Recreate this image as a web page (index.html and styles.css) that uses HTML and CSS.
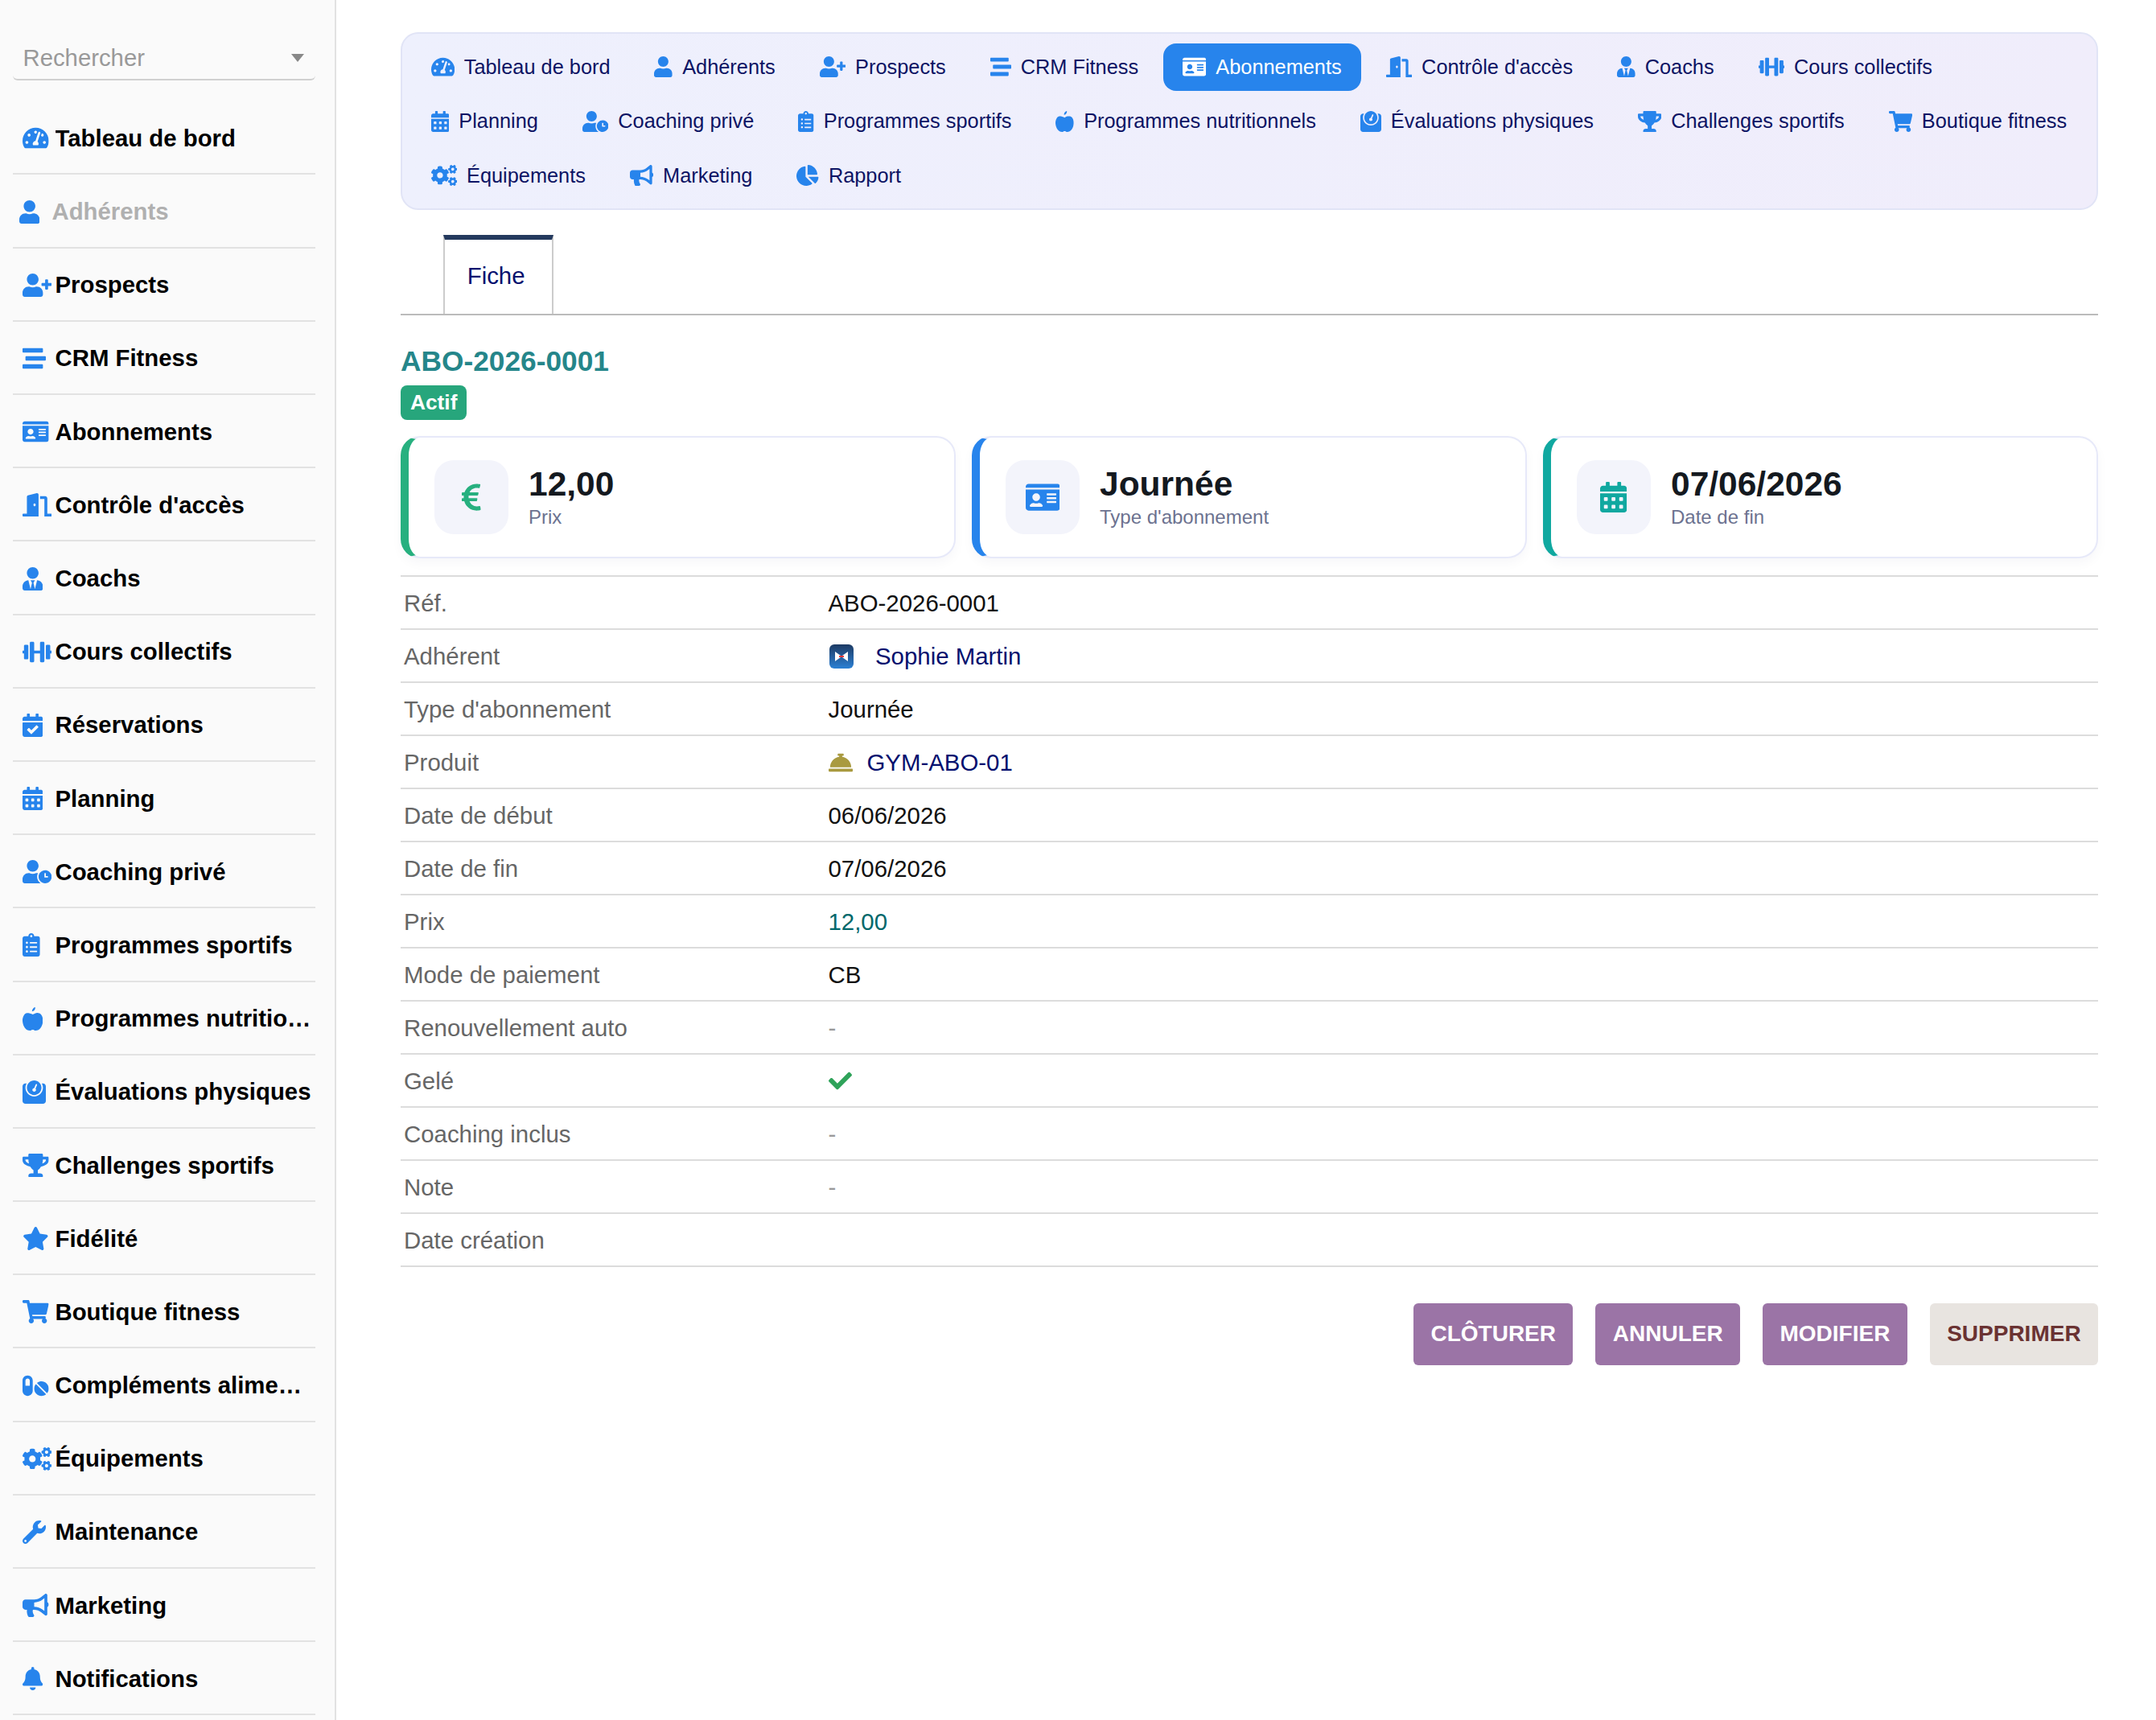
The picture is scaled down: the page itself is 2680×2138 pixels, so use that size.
FILE: index.html
```html
<!DOCTYPE html>
<html lang="fr">
<head>
<meta charset="utf-8">
<title>ABO-2026-0001</title>
<link rel="stylesheet" href="styles.css">
</head>
<body>
<svg class="sprite" aria-hidden="true">
<symbol id="i-gauge" viewBox="0 0 576 512"><path d="M288 32C128.94 32 0 160.94 0 320c0 52.8 14.25 102.26 39.06 144.8 5.61 9.62 16.3 15.2 27.44 15.2h443c11.14 0 21.83-5.58 27.44-15.2C561.75 422.26 576 372.8 576 320c0-159.06-128.94-288-288-288zm0 64c14.71 0 26.58 10.13 30.32 23.65-1.11 2.26-2.64 4.23-3.45 6.67l-9.22 27.67c-5.13 3.49-10.97 6.01-17.64 6.01-17.67 0-32-14.33-32-32S270.33 96 288 96zM96 384c-17.67 0-32-14.33-32-32s14.33-32 32-32 32 14.33 32 32-14.33 32-32 32zm48-160c-17.67 0-32-14.33-32-32s14.33-32 32-32 32 14.33 32 32-14.33 32-32 32zm246.77-72.41l-61.33 184C343.13 347.33 352 364.54 352 384c0 11.72-3.38 22.55-8.88 32H232.88c-5.5-9.45-8.88-20.28-8.88-32 0-33.94 26.5-61.43 59.9-63.59l61.34-184.01c4.17-12.56 17.73-19.45 30.36-15.17 12.57 4.19 19.35 17.79 15.17 30.36zm14.66 57.2l15.52-46.55c3.47-1.29 7.13-2.23 11.05-2.23 17.67 0 32 14.33 32 32s-14.33 32-32 32c-11.38-.01-20.89-6.28-26.57-15.22zM480 384c-17.67 0-32-14.33-32-32s14.33-32 32-32 32 14.33 32 32-14.33 32-32 32z"/></symbol>
<symbol id="i-user" viewBox="0 0 448 512"><path d="M224 256c70.7 0 128-57.3 128-128S294.7 0 224 0 96 57.3 96 128s57.3 128 128 128zm89.6 32h-16.7c-22.2 10.2-46.9 16-72.9 16s-50.6-5.8-72.9-16h-16.7C60.2 288 0 348.2 0 422.4V464c0 26.5 21.5 48 48 48h352c26.5 0 48-21.5 48-48v-41.6c0-74.2-60.2-134.4-134.4-134.4z"/></symbol>
<symbol id="i-user-plus" viewBox="0 0 640 512"><path d="M624 208h-64v-64c0-8.8-7.2-16-16-16h-32c-8.8 0-16 7.2-16 16v64h-64c-8.8 0-16 7.2-16 16v32c0 8.8 7.2 16 16 16h64v64c0 8.8 7.2 16 16 16h32c8.8 0 16-7.2 16-16v-64h64c8.8 0 16-7.2 16-16v-32c0-8.8-7.2-16-16-16zm-400 48c70.7 0 128-57.3 128-128S294.7 0 224 0 96 57.3 96 128s57.3 128 128 128zm89.6 32h-16.7c-22.2 10.2-46.9 16-72.9 16s-50.6-5.8-72.9-16h-16.7C60.2 288 0 348.2 0 422.4V464c0 26.5 21.5 48 48 48h352c26.5 0 48-21.5 48-48v-41.6c0-74.2-60.2-134.4-134.4-134.4z"/></symbol>
<symbol id="i-stream" viewBox="0 0 512 512"><path d="M16 128h416c8.84 0 16-7.16 16-16V48c0-8.84-7.16-16-16-16H16C7.16 32 0 39.16 0 48v64c0 8.84 7.16 16 16 16zm480 80H80c-8.84 0-16 7.16-16 16v64c0 8.84 7.16 16 16 16h416c8.84 0 16-7.16 16-16v-64c0-8.84-7.16-16-16-16zm-64 176H16c-8.84 0-16 7.16-16 16v64c0 8.84 7.16 16 16 16h416c8.84 0 16-7.16 16-16v-64c0-8.84-7.16-16-16-16z"/></symbol>
<symbol id="i-id" viewBox="0 0 576 512"><path d="M528 32H48C21.5 32 0 53.5 0 80v16h576V80c0-26.5-21.5-48-48-48zM0 432c0 26.5 21.5 48 48 48h480c26.5 0 48-21.5 48-48V128H0v304zm352-232c0-4.4 3.6-8 8-8h144c4.4 0 8 3.6 8 8v16c0 4.4-3.6 8-8 8H360c-4.4 0-8-3.6-8-8v-16zm0 64c0-4.4 3.6-8 8-8h144c4.4 0 8 3.6 8 8v16c0 4.4-3.6 8-8 8H360c-4.4 0-8-3.6-8-8v-16zm0 64c0-4.4 3.6-8 8-8h144c4.4 0 8 3.6 8 8v16c0 4.4-3.6 8-8 8H360c-4.4 0-8-3.6-8-8v-16zM176 192c35.3 0 64 28.7 64 64s-28.7 64-64 64-64-28.7-64-64 28.7-64 64-64zM67.1 396.2C75.5 370.5 99.6 352 128 352h8.2c12.3 5.1 25.7 8 39.8 8s27.6-2.9 39.8-8h8.2c28.4 0 52.5 18.5 60.9 44.2 3.2 9.9-5.2 19.8-15.6 19.8H82.7c-10.4 0-18.8-10-15.6-19.8z"/></symbol>
<symbol id="i-door" viewBox="0 0 640 512"><path d="M624 448h-80V113.45C544 86.19 522.47 64 496 64H384v64h96v384h144c8.84 0 16-7.16 16-16v-32c0-8.84-7.16-16-16-16zM312.24 1.01l-192 49.74C105.99 54.44 96 67.7 96 82.92V448H16c-8.84 0-16 7.16-16 16v32c0 8.84 7.16 16 16 16h336V33.18c0-21.58-19.56-37.41-39.76-32.17zM264 288c-13.25 0-24-14.33-24-32s10.75-32 24-32 24 14.33 24 32-10.75 32-24 32z"/></symbol>
<symbol id="i-tie" viewBox="0 0 448 512"><path d="M224 256c70.7 0 128-57.3 128-128S294.7 0 224 0 96 57.3 96 128s57.3 128 128 128zm95.8 32.6L272 480l-32-136 32-56h-96l32 56-32 136-47.8-191.4C56.9 292 0 350.3 0 422.4V464c0 26.5 21.5 48 48 48h352c26.5 0 48-21.5 48-48v-41.6c0-72.1-56.9-130.4-128.2-133.8z"/></symbol>
<symbol id="i-dumbbell" viewBox="0 0 640 512"><path d="M104 96H56c-13.3 0-24 10.7-24 24v104H8c-4.4 0-8 3.6-8 8v48c0 4.4 3.6 8 8 8h24v104c0 13.3 10.7 24 24 24h48c13.3 0 24-10.7 24-24V120c0-13.3-10.7-24-24-24zm528 128h-24V120c0-13.3-10.7-24-24-24h-48c-13.3 0-24 10.7-24 24v272c0 13.3 10.7 24 24 24h48c13.3 0 24-10.7 24-24V288h24c4.4 0 8-3.6 8-8v-48c0-4.4-3.6-8-8-8zM456 32h-48c-13.3 0-24 10.7-24 24v168H256V56c0-13.3-10.7-24-24-24h-48c-13.3 0-24 10.7-24 24v400c0 13.3 10.7 24 24 24h48c13.3 0 24-10.7 24-24V288h128v168c0 13.3 10.7 24 24 24h48c13.3 0 24-10.7 24-24V56c0-13.3-10.7-24-24-24z"/></symbol>
<symbol id="i-cal-check" viewBox="0 0 448 512"><path d="M436 160H12c-6.6 0-12-5.4-12-12v-36c0-26.5 21.5-48 48-48h48V12c0-6.6 5.4-12 12-12h40c6.6 0 12 5.4 12 12v52h128V12c0-6.6 5.4-12 12-12h40c6.6 0 12 5.4 12 12v52h48c26.5 0 48 21.5 48 48v36c0 6.6-5.4 12-12 12zM12 192h424c6.6 0 12 5.4 12 12v260c0 26.5-21.5 48-48 48H48c-26.5 0-48-21.5-48-48V204c0-6.6 5.4-12 12-12zm333.3 95.9l-28.2-28.4c-4.7-4.7-12.3-4.7-17-.1L194 365.9l-46-46.4c-4.7-4.7-12.3-4.7-17-.1l-28.4 28.2c-4.7 4.7-4.7 12.3-.1 17l82.6 83.2c4.7 4.7 12.3 4.7 17 .1l143.2-142c4.7-4.7 4.7-12.3 0-17z"/></symbol>
<symbol id="i-cal" viewBox="0 0 448 512"><path d="M0 464c0 26.5 21.5 48 48 48h352c26.5 0 48-21.5 48-48V192H0v272zm320-196c0-6.6 5.4-12 12-12h40c6.6 0 12 5.4 12 12v40c0 6.6-5.4 12-12 12h-40c-6.6 0-12-5.4-12-12v-40zm0 128c0-6.6 5.4-12 12-12h40c6.6 0 12 5.4 12 12v40c0 6.6-5.4 12-12 12h-40c-6.6 0-12-5.4-12-12v-40zM192 268c0-6.6 5.4-12 12-12h40c6.6 0 12 5.4 12 12v40c0 6.6-5.4 12-12 12h-40c-6.6 0-12-5.4-12-12v-40zm0 128c0-6.6 5.4-12 12-12h40c6.6 0 12 5.4 12 12v40c0 6.6-5.4 12-12 12h-40c-6.6 0-12-5.4-12-12v-40zM64 268c0-6.6 5.4-12 12-12h40c6.6 0 12 5.4 12 12v40c0 6.6-5.4 12-12 12H76c-6.6 0-12-5.4-12-12v-40zm0 128c0-6.6 5.4-12 12-12h40c6.6 0 12 5.4 12 12v40c0 6.6-5.4 12-12 12H76c-6.6 0-12-5.4-12-12v-40zM400 64h-48V16c0-8.8-7.2-16-16-16h-32c-8.8 0-16 7.2-16 16v48H160V16c0-8.8-7.2-16-16-16h-32c-8.8 0-16 7.2-16 16v48H48C21.5 64 0 85.5 0 112v48h448v-48c0-26.5-21.5-48-48-48z"/></symbol>
<symbol id="i-clock" viewBox="0 0 640 512"><path d="M496 224c-79.6 0-144 64.4-144 144s64.4 144 144 144 144-64.4 144-144-64.4-144-144-144zm64 150.3c0 5.3-4.4 9.7-9.7 9.7h-60.6c-5.3 0-9.7-4.4-9.7-9.7v-76.6c0-5.3 4.4-9.7 9.7-9.7h12.6c5.3 0 9.7 4.4 9.7 9.7V352h38.3c5.3 0 9.7 4.4 9.7 9.7v12.6zM320 368c0-27.8 6.7-54.1 18.2-77.5-8-1.5-16.2-2.5-24.6-2.5h-16.7c-22.2 10.2-46.9 16-72.9 16s-50.6-5.8-72.9-16h-16.7C60.2 288 0 348.2 0 422.4V464c0 26.5 21.5 48 48 48h347.1c-45.3-31.9-75.1-84.5-75.1-144zm-96-112c70.7 0 128-57.3 128-128S294.7 0 224 0 96 57.3 96 128s57.3 128 128 128z"/></symbol>
<symbol id="i-clip" viewBox="0 0 384 512"><path d="M336 64h-80c0-35.3-28.7-64-64-64s-64 28.7-64 64H48C21.5 64 0 85.5 0 112v352c0 26.5 21.5 48 48 48h288c26.5 0 48-21.5 48-48V112c0-26.5-21.5-48-48-48zM96 424c-13.3 0-24-10.7-24-24s10.7-24 24-24 24 10.7 24 24-10.7 24-24 24zm0-96c-13.3 0-24-10.7-24-24s10.7-24 24-24 24 10.7 24 24-10.7 24-24 24zm0-96c-13.3 0-24-10.7-24-24s10.7-24 24-24 24 10.7 24 24-10.7 24-24 24zm96-192c13.3 0 24 10.7 24 24s-10.7 24-24 24-24-10.7-24-24 10.7-24 24-24zm128 368c0 4.4-3.6 8-8 8H168c-4.4 0-8-3.6-8-8v-16c0-4.4 3.6-8 8-8h144c4.4 0 8 3.6 8 8v16zm0-96c0 4.4-3.6 8-8 8H168c-4.4 0-8-3.6-8-8v-16c0-4.4 3.6-8 8-8h144c4.4 0 8 3.6 8 8v16zm0-96c0 4.4-3.6 8-8 8H168c-4.4 0-8-3.6-8-8v-16c0-4.4 3.6-8 8-8h144c4.4 0 8 3.6 8 8v16z"/></symbol>
<symbol id="i-apple" viewBox="0 0 448 512"><path d="M350.85 129c25.97 4.67 47.27 18.67 63.92 42 14.65 20.67 24.64 46.67 29.96 78 4.67 28.67 4.32 57.33-1 86-7.99 47.33-23.97 87-47.94 119-28.64 38.67-64.59 58-107.87 58-10.66 0-22.3-3.33-34.96-10-8.66-5.33-18.31-8-28.97-8s-20.3 2.67-28.97 8c-12.66 6.67-24.3 10-34.96 10-43.28 0-79.23-19.33-107.87-58-23.97-32-39.95-71.67-47.94-119-5.32-28.67-5.67-57.33-1-86 5.32-31.33 15.31-57.33 29.96-78 16.65-23.33 37.95-37.33 63.92-42 15.98-2.67 37.95-.33 65.92 7 23.97 6.67 44.28 14.67 60.93 24 13.32-8 29.97-16.33 49.95-25 25.3-9.33 47.94-11.67 66.92-7zM255 72.3c-12.5 12.7-27.4 19.7-44.7 21-3.2-18 2-38 14-53.9C236 22 255 6 278 0c3 16 0 36-7 50-4.5 9-9 15-16 22.3z"/></symbol>
<symbol id="i-weight" viewBox="0 0 512 512"><path d="M448 64h-25.98C438.44 92.28 448 125.03 448 160c0 105.87-86.13 192-192 192S64 265.87 64 160c0-34.97 9.56-67.72 25.98-96H64C28.71 64 0 92.71 0 128v320c0 35.29 28.71 64 64 64h384c35.29 0 64-28.71 64-64V128c0-35.29-28.71-64-64-64zM256 320c88.37 0 160-71.63 160-160S344.37 0 256 0 96 71.63 96 160s71.63 160 160 160zm-.3-151.94l33.58-78.36c3.5-8.17 12.94-11.92 21.03-8.41 8.12 3.48 11.88 12.89 8.41 21l-33.67 78.55C291.73 188 296 197.45 296 208c0 22.09-17.91 40-40 40s-40-17.91-40-40c0-21.98 17.76-39.77 39.7-39.94z"/></symbol>
<symbol id="i-trophy" viewBox="0 0 576 512"><path d="M552 64H448V24c0-13.3-10.7-24-24-24H152c-13.3 0-24 10.7-24 24v40H24C10.7 64 0 74.7 0 88v56c0 35.7 22.5 72.4 61.9 100.7 31.5 22.7 69.8 37.1 110 41.7C203.3 338.5 240 360 240 360v72h-48c-35.3 0-64 20.7-64 56v12c0 6.6 5.4 12 12 12h296c6.6 0 12-5.4 12-12v-12c0-35.3-28.7-56-64-56h-48v-72s36.7-21.5 68.1-73.6c40.3-4.6 78.7-19 110-41.7 39.3-28.3 61.9-65 61.9-100.7V88c0-13.3-10.7-24-24-24zM99.3 192.8C74.9 175.2 64 155.6 64 144v-16h64.2c1 32.6 5.8 61.2 12.8 86.2-15.1-5.2-29.2-12.4-41.7-21.4zM512 144c0 16.1-17.7 36.1-35.3 48.8-12.5 9-26.7 16.2-41.8 21.4 7-25 11.8-53.6 12.8-86.2H512v16z"/></symbol>
<symbol id="i-star" viewBox="0 0 576 512"><path d="M259.3 17.8L194 150.2 47.9 171.5c-26.2 3.8-36.7 36.1-17.7 54.6l105.7 103-25 145.5c-4.5 26.3 23.2 46 46.4 33.7L288 439.6l130.7 68.7c23.2 12.2 50.9-7.4 46.4-33.7l-25-145.5 105.7-103c19-18.5 8.5-50.8-17.7-54.6L382 150.2 316.7 17.8c-11.7-23.6-45.6-23.9-57.4 0z"/></symbol>
<symbol id="i-cart" viewBox="0 0 576 512"><path d="M528.12 301.319l47.273-208C578.806 78.301 567.391 64 551.99 64H159.208l-9.166-44.81C147.758 8.021 137.93 0 126.529 0H24C10.745 0 0 10.745 0 24v16c0 13.255 10.745 24 24 24h69.883l70.248 343.435C147.325 417.1 136 435.222 136 456c0 30.928 25.072 56 56 56s56-25.072 56-56c0-15.674-6.447-29.835-16.824-40h209.647C430.447 426.165 424 440.326 424 456c0 30.928 25.072 56 56 56s56-25.072 56-56c0-22.172-12.888-41.332-31.579-50.405l5.517-24.276c3.413-15.018-8.002-29.319-23.403-29.319H218.117l-6.545-32h293.145c11.206 0 20.92-7.754 23.403-18.681z"/></symbol>
<symbol id="i-pills" viewBox="0 0 576 512"><path d="M112 32C50.1 32 0 82.1 0 144v224c0 61.9 50.1 112 112 112s112-50.1 112-112V144c0-61.9-50.1-112-112-112zm48 224H64V144c0-26.5 21.5-48 48-48s48 21.5 48 48v112zm139.7-29.7c-3.5-3.5-9.4-3.1-12.3.8-45.3 62.5-40.4 150.1 15.9 206.4 56.3 56.3 143.9 61.2 206.4 15.9 4-2.9 4.3-8.8.8-12.3L299.7 226.3zm229.8-19c-56.3-56.3-143.9-61.2-206.4-15.9-4 2.9-4.3 8.8-.8 12.3l210.8 210.8c3.5 3.5 9.4 3.1 12.3-.8 45.3-62.6 40.5-150.1-15.9-206.4z"/></symbol>
<symbol id="i-cogs" viewBox="0 0 640 512"><path d="M512.1 191l-8.2 14.3c-3 5.3-9.4 7.5-15.1 5.4-11.8-4.4-22.6-10.7-32.1-18.6-4.6-3.8-5.8-10.5-2.8-15.7l8.2-14.3c-6.9-8-12.3-17.3-15.9-27.4h-16.5c-6 0-11.2-4.3-12.2-10.3-2-12-2.1-24.6 0-37.1 1-6 6.2-10.4 12.2-10.4h16.5c3.6-10.1 9-19.4 15.9-27.4l-8.2-14.3c-3-5.2-1.9-11.9 2.8-15.7 9.5-7.9 20.4-14.2 32.1-18.6 5.7-2.1 12.1.1 15.1 5.4l8.2 14.3c10.5-1.9 21.2-1.9 31.7 0L552 6.3c3-5.3 9.4-7.5 15.1-5.4 11.8 4.4 22.6 10.7 32.1 18.6 4.6 3.8 5.8 10.5 2.8 15.7l-8.2 14.3c6.9 8 12.3 17.3 15.9 27.4h16.5c6 0 11.2 4.3 12.2 10.3 2 12 2.1 24.6 0 37.1-1 6-6.2 10.4-12.2 10.4h-16.5c-3.6 10.1-9 19.4-15.9 27.4l8.2 14.3c3 5.2 1.9 11.9-2.8 15.7-9.5 7.9-20.4 14.2-32.1 18.6-5.7 2.1-12.1-.1-15.1-5.4l-8.2-14.3c-10.4 1.9-21.2 1.9-31.7 0zm-10.5-58.8c38.5 29.6 82.4-14.3 52.8-52.8-38.5-29.7-82.4 14.3-52.8 52.8zM386.3 286.1l33.7 16.8c10.1 5.8 14.5 18.1 10.5 29.1-8.9 24.2-26.4 46.4-42.6 65.8-7.4 8.9-20.2 11.1-30.3 5.3l-29.1-16.8c-16 13.7-34.6 24.6-54.9 31.7v33.6c0 11.6-8.3 21.6-19.7 23.6-24.6 4.2-50.4 4.4-75.9 0-11.5-2-20-11.9-20-23.6V418c-20.3-7.2-38.9-18-54.9-31.7L74 403c-10 5.8-22.9 3.6-30.3-5.3-16.2-19.4-33.3-41.6-42.2-65.7-4-10.9.4-23.2 10.5-29.1l33.3-16.8c-3.9-20.9-3.9-42.4 0-63.4L12 205.8c-10.1-5.8-14.6-18.1-10.5-29 8.9-24.2 26-46.4 42.2-65.8 7.4-8.9 20.2-11.1 30.3-5.3l29.1 16.8c16-13.7 34.6-24.6 54.9-31.7V57.1c0-11.5 8.2-21.5 19.6-23.5 24.6-4.2 50.5-4.4 76-.1 11.5 2 20 11.9 20 23.6v33.6c20.3 7.2 38.9 18 54.9 31.7l29.1-16.8c10-5.8 22.9-3.6 30.3 5.3 16.2 19.4 33.2 41.6 42.1 65.8 4 10.9.1 23.2-10 29.1l-33.7 16.8c3.9 21 3.9 42.5 0 63.5zm-117.6 21.1c59.2-77-28.7-164.9-105.7-105.7-59.2 77 28.7 164.9 105.7 105.7zm243.4 182.7l-8.2 14.3c-3 5.3-9.4 7.5-15.1 5.4-11.8-4.4-22.6-10.7-32.1-18.6-4.6-3.8-5.8-10.5-2.8-15.7l8.2-14.3c-6.9-8-12.3-17.3-15.9-27.4h-16.5c-6 0-11.2-4.3-12.2-10.3-2-12-2.1-24.6 0-37.1 1-6 6.2-10.4 12.2-10.4h16.5c3.6-10.1 9-19.4 15.9-27.4l-8.2-14.3c-3-5.2-1.9-11.9 2.8-15.7 9.5-7.9 20.4-14.2 32.1-18.6 5.7-2.1 12.1.1 15.1 5.4l8.2 14.3c10.5-1.9 21.2-1.9 31.7 0l8.2-14.3c3-5.3 9.4-7.5 15.1-5.4 11.8 4.4 22.6 10.7 32.1 18.6 4.6 3.8 5.8 10.5 2.8 15.7l-8.2 14.3c6.9 8 12.3 17.3 15.9 27.4h16.5c6 0 11.2 4.3 12.2 10.3 2 12 2.1 24.6 0 37.1-1 6-6.2 10.4-12.2 10.4h-16.5c-3.6 10.1-9 19.4-15.9 27.4l8.2 14.3c3 5.2 1.9 11.9-2.8 15.7-9.5 7.9-20.4 14.2-32.1 18.6-5.7 2.1-12.1-.1-15.1-5.4l-8.2-14.3c-10.4 1.9-21.2 1.9-31.7 0zM501.6 431c38.5 29.6 82.4-14.3 52.8-52.8-38.5-29.6-82.4 14.3-52.8 52.8z"/></symbol>
<symbol id="i-wrench" viewBox="0 0 512 512"><path d="M507.73 109.1c-2.24-9.03-13.54-12.09-20.12-5.51l-74.36 74.36-67.88-11.31-11.31-67.88 74.36-74.36c6.62-6.62 3.43-17.9-5.66-20.16-47.38-11.74-99.55.91-136.58 37.93-39.64 39.64-50.55 97.1-34.05 147.2L18.74 402.76c-24.99 24.99-24.99 65.51 0 90.5 24.99 24.99 65.51 24.99 90.5 0l213.21-213.21c50.12 16.71 107.47 5.68 147.37-34.22 37.07-37.07 49.7-89.32 37.91-136.73zM64 472c-13.25 0-24-10.75-24-24 0-13.26 10.75-24 24-24s24 10.74 24 24c0 13.25-10.75 24-24 24z"/></symbol>
<symbol id="i-horn" viewBox="0 0 576 512"><path d="M576 240c0-23.63-12.95-44.04-32-55.12V32.01C544 23.26 537.02 0 512 0c-7.12 0-14.19 2.38-19.98 7.02l-85.03 68.03C364.28 109.19 310.66 128 256 128H64c-35.35 0-64 28.65-64 64v96c0 35.35 28.65 64 64 64h33.7c-1.39 10.48-2.18 21.14-2.18 32 0 39.77 9.26 77.35 25.56 110.94 5.19 10.69 16.52 17.06 28.4 17.06h74.28c26.05 0 41.69-29.84 25.9-50.56-16.4-21.52-26.15-48.36-26.15-77.44 0-11.11 1.62-21.79 4.41-32H256c54.66 0 108.28 18.81 150.98 52.95l85.03 68.03a32.023 32.023 0 0 0 19.98 7.02c24.92 0 32-22.78 32-32V295.13C563.05 284.04 576 263.63 576 240zm-96 141.42l-33.05-26.44C392.95 311.78 325.12 288 256 288v-96c69.12 0 136.95-23.78 190.95-66.98L480 98.58v282.84z"/></symbol>
<symbol id="i-bell" viewBox="0 0 448 512"><path d="M224 512c35.32 0 63.97-28.65 63.97-64H160.03c0 35.35 28.65 64 63.97 64zm215.39-149.71c-19.32-20.76-55.47-51.99-55.47-154.29 0-77.7-54.48-139.9-127.94-155.16V32c0-17.67-14.32-32-31.98-32s-31.98 14.33-31.98 32v20.84C118.56 68.1 64.08 130.3 64.08 208c0 102.3-36.15 133.53-55.47 154.29-6 6.45-8.66 14.16-8.61 21.71.11 16.4 12.98 32 32.1 32h383.8c19.12 0 32-15.6 32.1-32 .05-7.55-2.61-15.27-8.61-21.71z"/></symbol>
<symbol id="i-pie" viewBox="0 0 544 512"><path d="M527.79 288H290.5l158.03 158.03c6.04 6.04 15.98 6.53 22.19.68 38.7-36.46 65.32-85.61 73.13-140.86 1.34-9.46-6.51-17.85-16.06-17.85zm-15.83-64.8C503.72 103.74 408.26 8.28 288.8.04 279.68-.59 272 7.1 272 16.24V240h223.77c9.14 0 16.82-7.68 16.19-16.8zM224 288V50.71c0-9.55-8.39-17.4-17.84-16.06C86.99 51.49-4.1 155.6.14 280.37 4.5 408.51 114.83 513.59 243.03 511.98c50.4-.63 96.97-16.87 135.26-44.03 7.9-5.6 8.42-17.23 1.57-24.08L224 288z"/></symbol>
<symbol id="i-check" viewBox="0 0 512 512"><path d="M173.898 439.404l-166.4-166.4c-9.997-9.997-9.997-26.206 0-36.204l36.203-36.204c9.997-9.998 26.207-9.998 36.204 0L192 312.69 432.095 72.596c9.997-9.997 26.207-9.997 36.204 0l36.203 36.204c9.997 9.997 9.997 26.206 0 36.204l-294.4 294.401c-9.998 9.997-26.207 9.997-36.204-.001z"/></symbol>
<symbol id="i-euro" viewBox="0 0 320 512"><path d="M310.706 413.765c-1.314-6.63-7.835-10.872-14.424-9.369-10.692 2.439-27.422 5.413-45.426 5.413-56.763 0-101.929-34.79-121.461-85.449h113.689a12 12 0 0 0 11.708-9.369l6.373-28.36c1.686-7.502-4.019-14.631-11.708-14.631H115.22c-1.21-14.328-1.414-28.287.137-42.245H261.95a12 12 0 0 0 11.723-9.434l6.512-29.755c1.638-7.484-4.061-14.566-11.723-14.566H130.184c20.633-44.991 62.69-75.03 117.619-75.03 14.486 0 28.564 2.25 37.851 4.145 6.216 1.268 12.347-2.498 14.002-8.623l11.991-44.368c1.822-6.741-2.465-13.616-9.326-14.917C290.217 34.912 270.71 32 249.635 32 152.451 32 74.03 92.252 45.075 176H12c-6.627 0-12 5.373-12 12v29.755c0 6.627 5.373 12 12 12h21.569c-1.009 13.607-1.181 29.287-.181 42.245H12c-6.627 0-12 5.373-12 12v28.36c0 6.627 5.373 12 12 12h30.114C67.139 414.692 145.264 480 249.635 480c26.301 0 48.562-4.544 61.101-7.788 6.167-1.595 9.964-7.825 8.689-14.068l-8.719-44.379z"/></symbol>
<symbol id="i-concierge" viewBox="0 0 512 512"><path d="M288 130.54V112h16c8.84 0 16-7.16 16-16V80c0-8.84-7.16-16-16-16h-96c-8.84 0-16 7.16-16 16v16c0 8.84 7.16 16 16 16h16v18.54C115.49 146.11 32 239.18 32 352h448c0-112.82-83.49-205.89-192-221.46zM496 384H16c-8.84 0-16 7.16-16 16v32c0 8.84 7.16 16 16 16h480c8.84 0 16-7.16 16-16v-32c0-8.84-7.16-16-16-16z"/></symbol>
<linearGradient id="avatar-bg" x1="0" y1="0" x2="0" y2="1"><stop offset="0" stop-color="#1d3a63"/><stop offset="1" stop-color="#2b80d4"/></linearGradient>
</svg>

<div class="app">
  <aside class="sidebar">
    <div class="search"><span>Rechercher</span><i class="caret"></i></div>
    <nav class="side-nav">
      <a class="side-item"><span class="slot"><svg class="ic w576"><use href="#i-gauge"/></svg></span><span class="side-label">Tableau de bord</span></a>
      <a class="side-item is-muted"><span class="slot"><svg class="ic w448"><use href="#i-user"/></svg></span><span class="side-label">Adhérents</span></a>
      <a class="side-item"><span class="slot"><svg class="ic w640"><use href="#i-user-plus"/></svg></span><span class="side-label">Prospects</span></a>
      <a class="side-item"><span class="slot"><svg class="ic w512"><use href="#i-stream"/></svg></span><span class="side-label">CRM Fitness</span></a>
      <a class="side-item"><span class="slot"><svg class="ic w576"><use href="#i-id"/></svg></span><span class="side-label">Abonnements</span></a>
      <a class="side-item"><span class="slot"><svg class="ic w640"><use href="#i-door"/></svg></span><span class="side-label">Contrôle d'accès</span></a>
      <a class="side-item"><span class="slot"><svg class="ic w448"><use href="#i-tie"/></svg></span><span class="side-label">Coachs</span></a>
      <a class="side-item"><span class="slot"><svg class="ic w640"><use href="#i-dumbbell"/></svg></span><span class="side-label">Cours collectifs</span></a>
      <a class="side-item"><span class="slot"><svg class="ic w448"><use href="#i-cal-check"/></svg></span><span class="side-label">Réservations</span></a>
      <a class="side-item"><span class="slot"><svg class="ic w448"><use href="#i-cal"/></svg></span><span class="side-label">Planning</span></a>
      <a class="side-item"><span class="slot"><svg class="ic w640"><use href="#i-clock"/></svg></span><span class="side-label">Coaching privé</span></a>
      <a class="side-item"><span class="slot"><svg class="ic w384"><use href="#i-clip"/></svg></span><span class="side-label">Programmes sportifs</span></a>
      <a class="side-item"><span class="slot"><svg class="ic w448"><use href="#i-apple"/></svg></span><span class="side-label">Programmes nutritionnels</span></a>
      <a class="side-item"><span class="slot"><svg class="ic w512"><use href="#i-weight"/></svg></span><span class="side-label">Évaluations physiques</span></a>
      <a class="side-item"><span class="slot"><svg class="ic w576"><use href="#i-trophy"/></svg></span><span class="side-label">Challenges sportifs</span></a>
      <a class="side-item"><span class="slot"><svg class="ic w576"><use href="#i-star"/></svg></span><span class="side-label">Fidélité</span></a>
      <a class="side-item"><span class="slot"><svg class="ic w576"><use href="#i-cart"/></svg></span><span class="side-label">Boutique fitness</span></a>
      <a class="side-item"><span class="slot"><svg class="ic w576"><use href="#i-pills"/></svg></span><span class="side-label">Compléments alimentaires</span></a>
      <a class="side-item"><span class="slot"><svg class="ic w640"><use href="#i-cogs"/></svg></span><span class="side-label">Équipements</span></a>
      <a class="side-item"><span class="slot"><svg class="ic w512"><use href="#i-wrench"/></svg></span><span class="side-label">Maintenance</span></a>
      <a class="side-item"><span class="slot"><svg class="ic w576"><use href="#i-horn"/></svg></span><span class="side-label">Marketing</span></a>
      <a class="side-item"><span class="slot"><svg class="ic w448"><use href="#i-bell"/></svg></span><span class="side-label">Notifications</span></a>
    </nav>
  </aside>

  <main class="main">
    <nav class="apps">
      <a class="app-link"><svg class="ic w576"><use href="#i-gauge"/></svg>Tableau de bord</a>
      <a class="app-link"><svg class="ic w448"><use href="#i-user"/></svg>Adhérents</a>
      <a class="app-link"><svg class="ic w640"><use href="#i-user-plus"/></svg>Prospects</a>
      <a class="app-link"><svg class="ic w512"><use href="#i-stream"/></svg>CRM Fitness</a>
      <a class="app-link is-active"><svg class="ic w576"><use href="#i-id"/></svg>Abonnements</a>
      <a class="app-link"><svg class="ic w640"><use href="#i-door"/></svg>Contrôle d'accès</a>
      <a class="app-link"><svg class="ic w448"><use href="#i-tie"/></svg>Coachs</a>
      <a class="app-link"><svg class="ic w640"><use href="#i-dumbbell"/></svg>Cours collectifs</a>
      <a class="app-link"><svg class="ic w448"><use href="#i-cal"/></svg>Planning</a>
      <a class="app-link"><svg class="ic w640"><use href="#i-clock"/></svg>Coaching privé</a>
      <a class="app-link"><svg class="ic w384"><use href="#i-clip"/></svg>Programmes sportifs</a>
      <a class="app-link"><svg class="ic w448"><use href="#i-apple"/></svg>Programmes nutritionnels</a>
      <a class="app-link"><svg class="ic w512"><use href="#i-weight"/></svg>Évaluations physiques</a>
      <a class="app-link"><svg class="ic w576"><use href="#i-trophy"/></svg>Challenges sportifs</a>
      <a class="app-link"><svg class="ic w576"><use href="#i-cart"/></svg>Boutique fitness</a>
      <a class="app-link"><svg class="ic w640"><use href="#i-cogs"/></svg>Équipements</a>
      <a class="app-link"><svg class="ic w576"><use href="#i-horn"/></svg>Marketing</a>
      <a class="app-link"><svg class="ic w544"><use href="#i-pie"/></svg>Rapport</a>
    </nav>

    <div class="tabs"><a class="tab">Fiche</a></div>

    <h1 class="title">ABO-2026-0001</h1>
    <div class="badge-row"><span class="badge">Actif</span></div>

    <section class="cards">
      <article class="card card-green">
        <div class="card-icon"><svg class="ic w320"><use href="#i-euro"/></svg></div>
        <div class="card-text"><div class="card-value">12,00</div><div class="card-label">Prix</div></div>
      </article>
      <article class="card card-blue">
        <div class="card-icon"><svg class="ic w576"><use href="#i-id"/></svg></div>
        <div class="card-text"><div class="card-value">Journée</div><div class="card-label">Type d'abonnement</div></div>
      </article>
      <article class="card card-teal">
        <div class="card-icon"><svg class="ic w448"><use href="#i-cal"/></svg></div>
        <div class="card-text"><div class="card-value">07/06/2026</div><div class="card-label">Date de fin</div></div>
      </article>
    </section>

    <section class="fields">
      <div class="field"><span class="field-label">Réf.</span><span class="field-value">ABO-2026-0001</span></div>
      <div class="field"><span class="field-label">Adhérent</span><span class="field-value">
        <svg class="avatar" viewBox="0 0 30 30"><rect width="30" height="30" rx="6" fill="url(#avatar-bg)"/><path d="M7 9l7 5v2l-7 5z" fill="#fff"/><path d="M23 9l-7 5v2l7 5z" fill="#fff"/><rect x="12" y="14" width="6" height="2" fill="#e8383a"/></svg>
        <a class="link">Sophie Martin</a></span></div>
      <div class="field"><span class="field-label">Type d'abonnement</span><span class="field-value">Journée</span></div>
      <div class="field"><span class="field-label">Produit</span><span class="field-value">
        <svg class="bell"><use href="#i-concierge"/></svg>
        <a class="link">GYM-ABO-01</a></span></div>
      <div class="field"><span class="field-label">Date de début</span><span class="field-value">06/06/2026</span></div>
      <div class="field"><span class="field-label">Date de fin</span><span class="field-value">07/06/2026</span></div>
      <div class="field"><span class="field-label">Prix</span><span class="field-value money">12,00</span></div>
      <div class="field"><span class="field-label">Mode de paiement</span><span class="field-value">CB</span></div>
      <div class="field"><span class="field-label">Renouvellement auto</span><span class="field-value empty">-</span></div>
      <div class="field"><span class="field-label">Gelé</span><span class="field-value"><svg class="tick"><use href="#i-check"/></svg></span></div>
      <div class="field"><span class="field-label">Coaching inclus</span><span class="field-value empty">-</span></div>
      <div class="field"><span class="field-label">Note</span><span class="field-value empty">-</span></div>
      <div class="field"><span class="field-label">Date création</span><span class="field-value"></span></div>
    </section>

    <div class="actions">
      <button class="btn btn-primary">Clôturer</button>
      <button class="btn btn-primary">Annuler</button>
      <button class="btn btn-primary">Modifier</button>
      <button class="btn btn-danger">Supprimer</button>
    </div>
  </main>
</div>
</body>
</html>
```

FILE: styles.css
```css
* { box-sizing: border-box; }
html, body { margin: 0; height: 100%; background: #fff; overflow: hidden; }
body { font-family: "Liberation Sans", Arial, sans-serif; color: #111; }
.sprite { position: absolute; width: 0; height: 0; }
.ic { height: 1em; fill: currentColor; display: block; flex: none; }
.w320 { width: .625em; }
.w384 { width: .75em; }
.w448 { width: .875em; }
.w512 { width: 1em; }
.w544 { width: 1.0625em; }
.w576 { width: 1.125em; }
.w640 { width: 1.25em; }

.app { display: flex; height: 2138px; overflow: hidden; }

/* Sidebar */
.sidebar { width: 418px; flex: none; background: #fafafa; border-right: 2px solid #e2e2e2; padding: 45.5px 24px 0 16px; }
.search { display: flex; align-items: center; justify-content: space-between; height: 54px; padding: 0 13px 0 12.5px; border-bottom: 2px solid #d0d0d0; border-radius: 0 0 6px 6px; font-size: 29.3px; color: #999; }
.caret { width: 0; height: 0; border-left: 8px solid transparent; border-right: 8px solid transparent; border-top: 10px solid #888; margin-right: 1px; }
.side-nav { margin-top: 26.8px; }
.side-item { display: flex; align-items: center; height: 91.2px; padding: 2px 4px 0 12px; border-bottom: 2px solid #e2e2e2; font-size: 29.35px; font-weight: 700; color: #000; }
.slot { width: 40.5px; flex: none; color: #2784ec; }
.slot .ic { font-size: 29px; }
.side-label { min-width: 0; overflow: hidden; white-space: nowrap; text-overflow: ellipsis; }
.is-muted { color: #b0b0b0; padding-left: 8px; }

/* Main */
.main { flex: 1; min-width: 0; padding: 40px 72px 0 80px; }
.apps { display: flex; flex-wrap: wrap; gap: 8.8px 5.9px; padding: 12px 8px 12px 11px; height: 221px; background: linear-gradient(90deg, #eef0fd, #f0edfb); border: 2px solid #e1e4f6; border-radius: 22px; align-content: flex-start; }
.app-link { display: flex; align-items: center; gap: 12px; height: 58.7px; padding: 0 24.5px; font-size: 25.35px; color: #0d1464; border-radius: 16px; white-space: nowrap; }
.app-link .ic { font-size: 26px; color: #2784ec; }
.app-link.is-active { background: #2784ec; color: #fff; }
.app-link.is-active .ic { color: #fff; }

.tabs { display: flex; margin-top: 31px; padding-left: 52.7px; border-bottom: 2px solid #bbb; height: 100px; }
.tab { display: flex; align-items: center; width: 137px; height: 98px; padding: 0 0 2px 28px; border: 2px solid #ccc; border-top: 6px solid #243a5e; border-bottom: 0; font-size: 29.4px; color: #05106e; }

.title { margin: 36px 0 0; font-size: 35.3px; line-height: 42px; font-weight: 700; color: #25868a; }
.badge-row { display: flex; margin-top: 9px; }
.badge { display: flex; align-items: center; height: 43px; padding: 0 12px; background: #27a67c; color: #fff; border-radius: 8px; font-size: 26.3px; font-weight: 700; }

.cards { display: grid; grid-template-columns: repeat(3, 1fr); gap: 20px; margin-top: 20px; }
.card { display: flex; align-items: center; gap: 25px; height: 152px; padding-left: 32px; background: #fff; border: 2px solid #e7e9f9; border-left-width: 10px; border-radius: 24px; box-shadow: 0 6px 14px rgba(30, 40, 90, .035); }
.card-green { border-left-color: #27b07f; }
.card-blue { border-left-color: #2784ec; }
.card-teal { border-left-color: #10a8a0; }
.card-icon { display: flex; align-items: center; justify-content: center; width: 92px; height: 92px; border-radius: 24px; background: #f3f4fb; font-size: 38px; flex: none; }
.card-green .card-icon { color: #27b07f; }
.card-blue .card-icon { color: #2784ec; }
.card-teal .card-icon { color: #10a8a0; }
.card-text { padding-bottom: 2px; }
.card-value { font-size: 42.5px; line-height: 50px; font-weight: 700; color: #14191f; }
.card-label { font-size: 24px; line-height: 30px; margin-top: 1px; color: #6c7290; }

.fields { margin-top: 21px; border-top: 2px solid #dcdcdc; }
.field { display: grid; grid-template-columns: 25% 1fr; align-items: center; height: 66px; padding-top: 1px; border-bottom: 2px solid #dcdcdc; font-size: 29.4px; }
.field-label { padding-left: 4px; color: #666; }
.field-value { display: flex; align-items: center; padding-left: 4px; color: #111; }
.money { color: #00686b; }
.empty { color: #999; }
.link { color: #05106e; }
.avatar { width: 30px; height: 30px; margin: 0 27px 0 1.5px; flex: none; }
.bell { width: 30px; height: 30px; margin-right: 18px; fill: #a99a40; flex: none; }
.tick { width: 29px; height: 29px; fill: #2fa35a; display: block; }

.actions { display: flex; justify-content: flex-end; gap: 28px; margin-top: 44.5px; }
.btn { height: 77px; padding: 0 21.4px; border: 0; border-radius: 6px; font-family: inherit; font-size: 28px; font-weight: 700; text-transform: uppercase; }
.btn-primary { background: #9b74a6; color: #fff; }
.btn-danger { background: #e8e4e0; color: #6a3232; }
```
